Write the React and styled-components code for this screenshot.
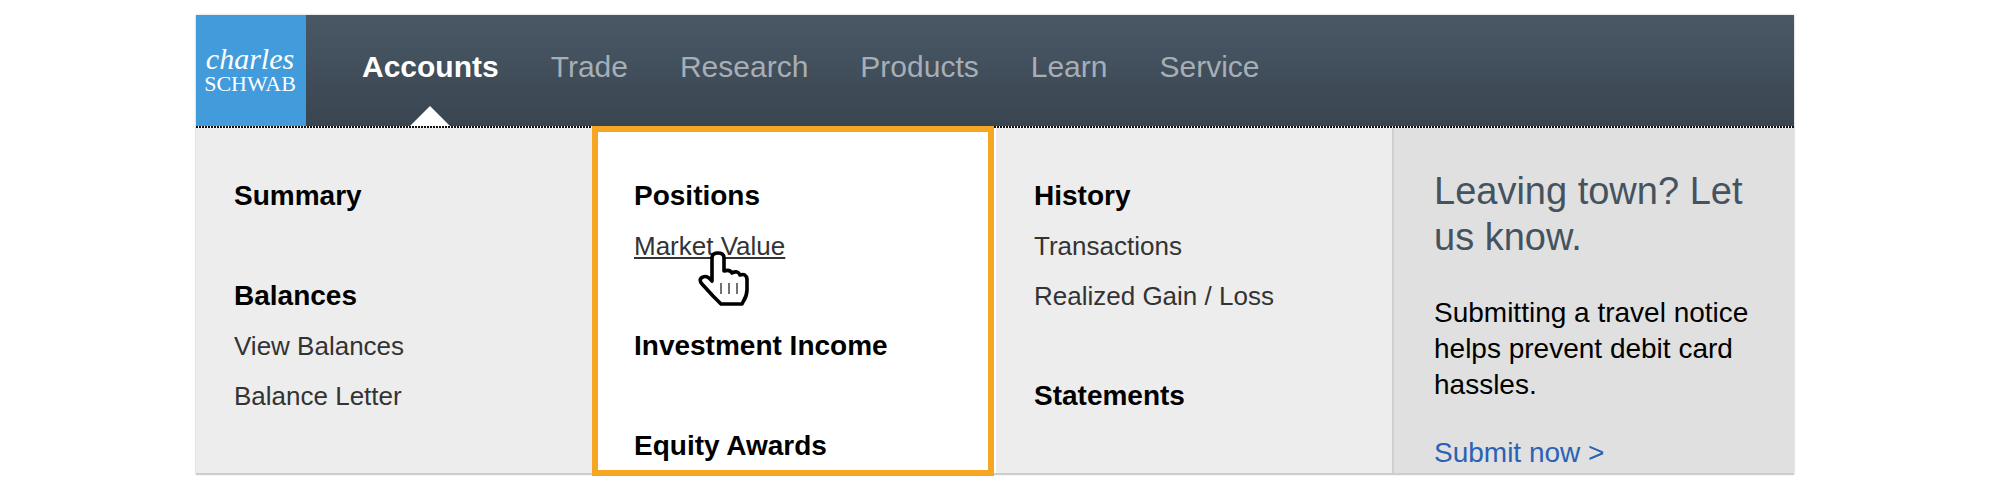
import styled, { createGlobalStyle } from "styled-components"

const GlobalStyle = createGlobalStyle`
    body {
        margin: 0;
        background: #ffffff;
        font-family: "Liberation Sans", Arial, sans-serif;
    }
`

const Page = styled.div`
    width: 1598px;
    margin: 15px 0 4px 196px;
    box-shadow: 0 1px 1px rgba(0, 0, 0, 0.12), 0 0 2px rgba(0, 0, 0, 0.25);
`

const Header = styled.header`
    display: flex;
    height: 111px;
    background: linear-gradient(#4a5866, #394550);
`

const Logo = styled.div`
    width: 110px;
    background: #429bda;
    color: #ffffff;
    font-family: "Liberation Serif", "Times New Roman", serif;
    display: flex;
    flex-direction: column;
    align-items: center;
    padding: 29px 2px 0 0;
    box-sizing: border-box;
`

const LogoTop = styled.span`
    font-style: italic;
    font-size: 30px;
    line-height: 30px;
`

const LogoBottom = styled.span`
    font-size: 22px;
    line-height: 20px;
`

const Nav = styled.nav`
    display: flex;
    gap: 52px;
    padding-left: 56px;
`

const NavItem = styled.a`
    position: relative;
    display: block;
    height: 111px;
    line-height: 103px;
    font-size: 30px;
    font-weight: ${props => (props.$active ? 700 : 400)};
    color: ${props => (props.$active ? "#ffffff" : "#a6aeb6")};

    &::after {
        content: "";
        display: ${props => (props.$active ? "block" : "none")};
        position: absolute;
        left: 50%;
        bottom: 0;
        margin-left: -20px;
        border-left: 20px solid transparent;
        border-right: 20px solid transparent;
        border-bottom: 20px solid #ffffff;
    }
`

const Dots = styled.div`
    height: 2px;
    background: repeating-linear-gradient(90deg, #111111 0 2px, #ffffff 2px 3px);
`

const Panel = styled.div`
    display: grid;
    grid-template-columns: 400px 400px 396px 1fr;
    height: 345px;
    background: #ededed;
    border-bottom: 1px solid #cdcdcd;
    overflow: hidden;
`

const Column = styled.div`
    position: relative;
    padding: 43px 0 0 38px;
    background: ${props => (props.$highlight ? "#ffffff" : "transparent")};
`

const Highlight = styled.div`
    position: absolute;
    z-index: 2;
    width: 402px;
    height: 350px;
    margin: -2px 0 0 396px;
    border: 6px solid #f5a623;
    box-sizing: border-box;
    pointer-events: none;
`

const Group = styled.div`
    margin-bottom: ${props => props.$after || 0}px;
`

const Title = styled.h3`
    margin: 0;
    height: 50px;
    line-height: 50px;
    font-size: 28px;
    font-weight: 700;
    color: #000000;
`

const Item = styled.a`
    display: block;
    height: 50px;
    line-height: 50px;
    font-size: 26px;
    color: #333333;
    text-decoration: ${props => (props.$hover ? "underline" : "none")};
`

const Side = styled.aside`
    padding: 40px 20px 0 40px;
    background: #e0e0e0;
    border-left: 2px solid #cfcfcf;
`

const SideTitle = styled.h2`
    margin: 0 0 35px;
    font-size: 38px;
    line-height: 46px;
    font-weight: 400;
    color: #45535f;
`

const SideText = styled.p`
    margin: 0 0 32px;
    font-size: 28px;
    line-height: 36px;
    color: #000000;
`

const SideLink = styled.a`
    display: block;
    font-size: 28px;
    line-height: 36px;
    color: #2a62b4;
`

const Cursor = styled.svg`
    position: absolute;
    z-index: 3;
    left: 84px;
    top: 112px;
    width: 80px;
    height: 80px;
`

function HandCursor() {
    return (
        <Cursor viewBox="0 0 80 80">
            <path
                d="M32 38 L32 18 Q32 13 38 13 Q44 13 44 18 L44 31 Q50 29 52 33 Q58 30 60 35 Q66 33 67 39 L67 50 Q67 56 63 62 L62 64 L41 64 L33 56 L22 44 Q18 39 23 37 Q27 35 32 41 Z"
                fill="#ffffff"
                stroke="#000000"
                strokeWidth="3.6"
                strokeLinejoin="round"
            />
            <path d="M41 43 V54 M49 43 V54 M57 43 V54" stroke="#444444" strokeWidth="1.5" />
        </Cursor>
    )
}

export default function App() {
    const navItems = ["Trade", "Research", "Products", "Learn", "Service"]

    return (
        <>
            <GlobalStyle />
            <Page>
                <Header>
                    <Logo>
                        <LogoTop>charles</LogoTop>
                        <LogoBottom>SCHWAB</LogoBottom>
                    </Logo>
                    <Nav>
                        <NavItem $active>Accounts</NavItem>
                        {navItems.map(item => (
                            <NavItem key={item}>{item}</NavItem>
                        ))}
                    </Nav>
                </Header>
                <Dots />
                <Highlight />
                <Panel>
                    <Column>
                        <Group $after={50}>
                            <Title>Summary</Title>
                        </Group>
                        <Group>
                            <Title>Balances</Title>
                            <Item>View Balances</Item>
                            <Item>Balance Letter</Item>
                        </Group>
                    </Column>
                    <Column $highlight>
                        <Group $after={50}>
                            <Title>Positions</Title>
                            <Item $hover>Market Value</Item>
                            <HandCursor />
                        </Group>
                        <Group $after={50}>
                            <Title>Investment Income</Title>
                        </Group>
                        <Group>
                            <Title>Equity Awards</Title>
                        </Group>
                    </Column>
                    <Column>
                        <Group $after={50}>
                            <Title>History</Title>
                            <Item>Transactions</Item>
                            <Item>Realized Gain / Loss</Item>
                        </Group>
                        <Group>
                            <Title>Statements</Title>
                        </Group>
                    </Column>
                    <Side>
                        <SideTitle>Leaving town? Let us know.</SideTitle>
                        <SideText>Submitting a travel notice helps prevent debit card hassles.</SideText>
                        <SideLink>Submit now &gt;</SideLink>
                    </Side>
                </Panel>
            </Page>
        </>
    )
}
